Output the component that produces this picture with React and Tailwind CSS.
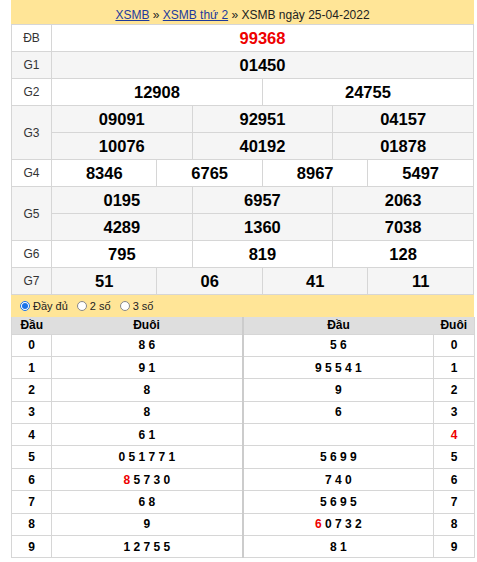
import React from 'react'

const rows = [
  { label: 'ĐB', cols: 1, nums: ['99368'], gray: false, red: true },
  { label: 'G1', cols: 1, nums: ['01450'], gray: true },
  { label: 'G2', cols: 2, nums: ['12908', '24755'], gray: false },
  { label: 'G3', cols: 3, nums: ['09091', '92951', '04157', '10076', '40192', '01878'], gray: true },
  { label: 'G4', cols: 4, nums: ['8346', '6765', '8967', '5497'], gray: false },
  { label: 'G5', cols: 3, nums: ['0195', '6957', '2063', '4289', '1360', '7038'], gray: true },
  { label: 'G6', cols: 3, nums: ['795', '819', '128'], gray: false },
  { label: 'G7', cols: 4, nums: ['51', '06', '41', '11'], gray: true },
]

// đầu - đuôi; chữ số đỏ đánh dấu bằng '*'
const loto = [
  ['0', '8 6', '5 6'],
  ['1', '9 1', '9 5 5 4 1'],
  ['2', '8', '9'],
  ['3', '8', '6'],
  ['4', '6 1', '', true],
  ['5', '0 5 1 7 7 1', '5 6 9 9'],
  ['6', '*8 5 7 3 0', '7 4 0'],
  ['7', '6 8', '5 6 9 5'],
  ['8', '9', '*6 0 7 3 2'],
  ['9', '1 2 7 5 5', '8 1'],
]

const Digits = ({ text }) => {
  if (text.startsWith('*')) {
    return (
      <>
        <span className="text-[#e00]">{text[1]}</span>
        {text.slice(2)}
      </>
    )
  }
  return text
}

const Radio = ({ checked, label }) => (
  <label className="flex items-center gap-[3px] mr-[9px]">
    <span
      className={
        checked
          ? 'w-[10px] h-[10px] rounded-full border border-[#1a73e8] bg-white flex items-center justify-center'
          : 'w-[10px] h-[10px] rounded-full border border-[#888] bg-white'
      }
    >
      {checked && <span className="w-[6px] h-[6px] rounded-full bg-[#1a73e8]" />}
    </span>
    <span>{label}</span>
  </label>
)

export default function App() {
  return (
    <div className="min-h-screen bg-white font-['Liberation_Sans',Arial,sans-serif] text-black">
      <div className="ml-[11px] w-[463px]">
        {/* tiêu đề */}
        <div className="h-[24px] bg-[#ffe597] text-[12px] text-center pt-[8px] leading-[14px] text-[#222]">
          <a className="text-[#1d3a9c] underline" href="#">XSMB</a>
          <span> » </span>
          <a className="text-[#1d3a9c] underline" href="#">XSMB thứ 2</a>
          <span> » XSMB ngày 25-04-2022</span>
        </div>

        {/* bảng kết quả */}
        <table className="w-[463px] table-fixed border-collapse">
          <colgroup>
            <col className="w-[40px]" />
            {Array.from({ length: 12 }).map((_, i) => (
              <col key={i} />
            ))}
          </colgroup>
          <tbody>
            {rows.map((r) => {
              const lines = []
              for (let i = 0; i < r.nums.length; i += r.cols) lines.push(r.nums.slice(i, i + r.cols))
              const bg = r.gray ? 'bg-[#f5f5f5]' : 'bg-white'
              return lines.map((line, li) => (
                <tr key={r.label + li} className={bg}>
                  {li === 0 && (
                    <td
                      rowSpan={lines.length}
                      className="border border-[#d6d6d6] text-center text-[12px] text-[#333] p-0"
                    >
                      {r.label}
                    </td>
                  )}
                  {line.map((n, ni) => (
                    <td
                      key={ni}
                      colSpan={12 / r.cols}
                      className={
                        'border border-[#d6d6d6] h-[27px] p-0 text-center font-bold text-[16.5px] leading-[26px] ' +
                        (r.red ? 'text-[#e00]' : 'text-black')
                      }
                    >
                      {n}
                    </td>
                  ))}
                </tr>
              ))
            })}
          </tbody>
        </table>

        {/* chọn kiểu hiển thị */}
        <div className="h-[22px] bg-[#ffe597] flex items-center pl-[9px] text-[11px] text-[#222]">
          <Radio checked label="Đầy đủ" />
          <Radio label="2 số" />
          <Radio label="3 số" />
        </div>

        {/* bảng lô tô */}
        <table className="w-[463px] table-fixed border-collapse text-[12px] font-bold">
          <colgroup>
            <col className="w-[40px]" />
            <col className="w-[191px]" />
            <col className="w-[191px]" />
            <col className="w-[41px]" />
          </colgroup>
          <thead>
            <tr className="bg-[#dedede] h-[17px]">
              <th className="border-l border-[#d6d6d6] p-0 leading-[16px] font-bold">Đầu</th>
              <th className="border-r-2 border-[#cccccc] p-0 leading-[16px] font-bold">Đuôi</th>
              <th className="p-0 leading-[16px] font-bold">Đầu</th>
              <th className="border-r border-[#d6d6d6] p-0 leading-[16px] font-bold">Đuôi</th>
            </tr>
          </thead>
          <tbody>
            {loto.map(([d, tail, head, redEnd]) => (
              <tr key={d} className="h-[22.4px]">
                <td className="border border-[#d6d6d6] text-center p-0">{d}</td>
                <td className="border border-[#d6d6d6] border-r-2 border-r-[#cccccc] text-center p-0 whitespace-pre">
                  <Digits text={tail} />
                </td>
                <td className="border border-[#d6d6d6] text-center p-0 whitespace-pre">
                  <Digits text={head} />
                </td>
                <td className={'border border-[#d6d6d6] text-center p-0 ' + (redEnd ? 'text-[#e00]' : '')}>{d}</td>
              </tr>
            ))}
          </tbody>
        </table>
      </div>
    </div>
  )
}
